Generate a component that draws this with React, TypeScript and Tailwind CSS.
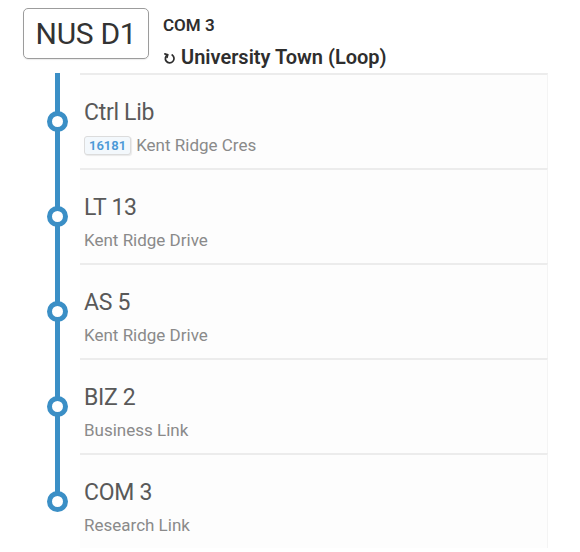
import React from "react";

interface Stop {
  name: string;
  road: string;
  code?: string;
}

const stops: Stop[] = [
  { name: "Ctrl Lib", road: "Kent Ridge Cres", code: "16181" },
  { name: "LT 13", road: "Kent Ridge Drive" },
  { name: "AS 5", road: "Kent Ridge Drive" },
  { name: "BIZ 2", road: "Business Link" },
  { name: "COM 3", road: "Research Link" },
];

function LoopIcon() {
  return (
    <svg className="w-[13px] h-[13px] mr-[5px] mt-[3px]" viewBox="0 0 24 24" fill="none" stroke="currentColor" strokeWidth={3.2} strokeLinecap="round" strokeLinejoin="round">
      <path d="M8.5 5A8 8 0 1 0 17 5.5" />
      <path d="M3.5 3.5L8.5 5L7.5 10" />
    </svg>
  );
}

export default function App() {
  return (
    <div className="w-[580px] h-[552px] bg-white font-['Roboto',sans-serif] overflow-hidden">
      {/* Header */}
      <div className="h-[73px] flex items-start pt-[8px] pl-[23px]">
        <div className="w-[126px] h-[51px] border border-[#9c9c9c] rounded-[5px] flex items-center justify-center text-[30px] text-[#333] tracking-[-0.3px] shadow-[0_1px_1px_rgba(0,0,0,0.08)]">
          NUS D1
        </div>
        <div className="ml-[14px] flex flex-col text-[#2e2e2e]">
          <div className="text-[17px] font-semibold leading-[20px] mt-[7px]">COM 3</div>
          <div className="flex items-center text-[20px] font-semibold leading-[24px] mt-[10px]">
            <LoopIcon />
            University Town (Loop)
          </div>
        </div>
      </div>

      {/* Stops */}
      <div className="flex flex-col">
        {stops.map((s, i) => (
          <div key={s.name} className="flex h-[95px]">
            <div className="w-[80px] relative">
              <div
                className={
                  i === stops.length - 1
                    ? "absolute left-[55px] w-[5px] top-0 h-[48px] bg-[#3b8fc6]"
                    : "absolute left-[55px] w-[5px] top-0 bottom-0 bg-[#3b8fc6]"
                }
              />
              <div className="absolute left-[47px] top-[38px] w-[21px] h-[21px] rounded-full border-[5px] border-[#3b8fc6] bg-white" />
            </div>
            <div className="flex-1 mr-[32px] border-t-2 border-[#ececec] border-r border-r-[#f4f4f4] bg-[#fdfdfd] pl-[4px] pt-[24px]">
              <div className="text-[23px] leading-[28px] text-[#595959] tracking-[-0.3px]">{s.name}</div>
              <div className="flex items-center mt-[8px] h-[21px]">
                {s.code && (
                  <span className="mr-[5px] px-[4px] h-[19px] flex items-center rounded-[3px] border border-[#dcdcdc] bg-[#f3f8fc] text-[13px] font-semibold text-[#4a98d6] shadow-[1px_1px_1px_rgba(0,0,0,0.08)]">
                    {s.code}
                  </span>
                )}
                <span className="text-[17px] leading-[21px] text-[#8a8a8a]">{s.road}</span>
              </div>
            </div>
          </div>
        ))}
      </div>
    </div>
  );
}
